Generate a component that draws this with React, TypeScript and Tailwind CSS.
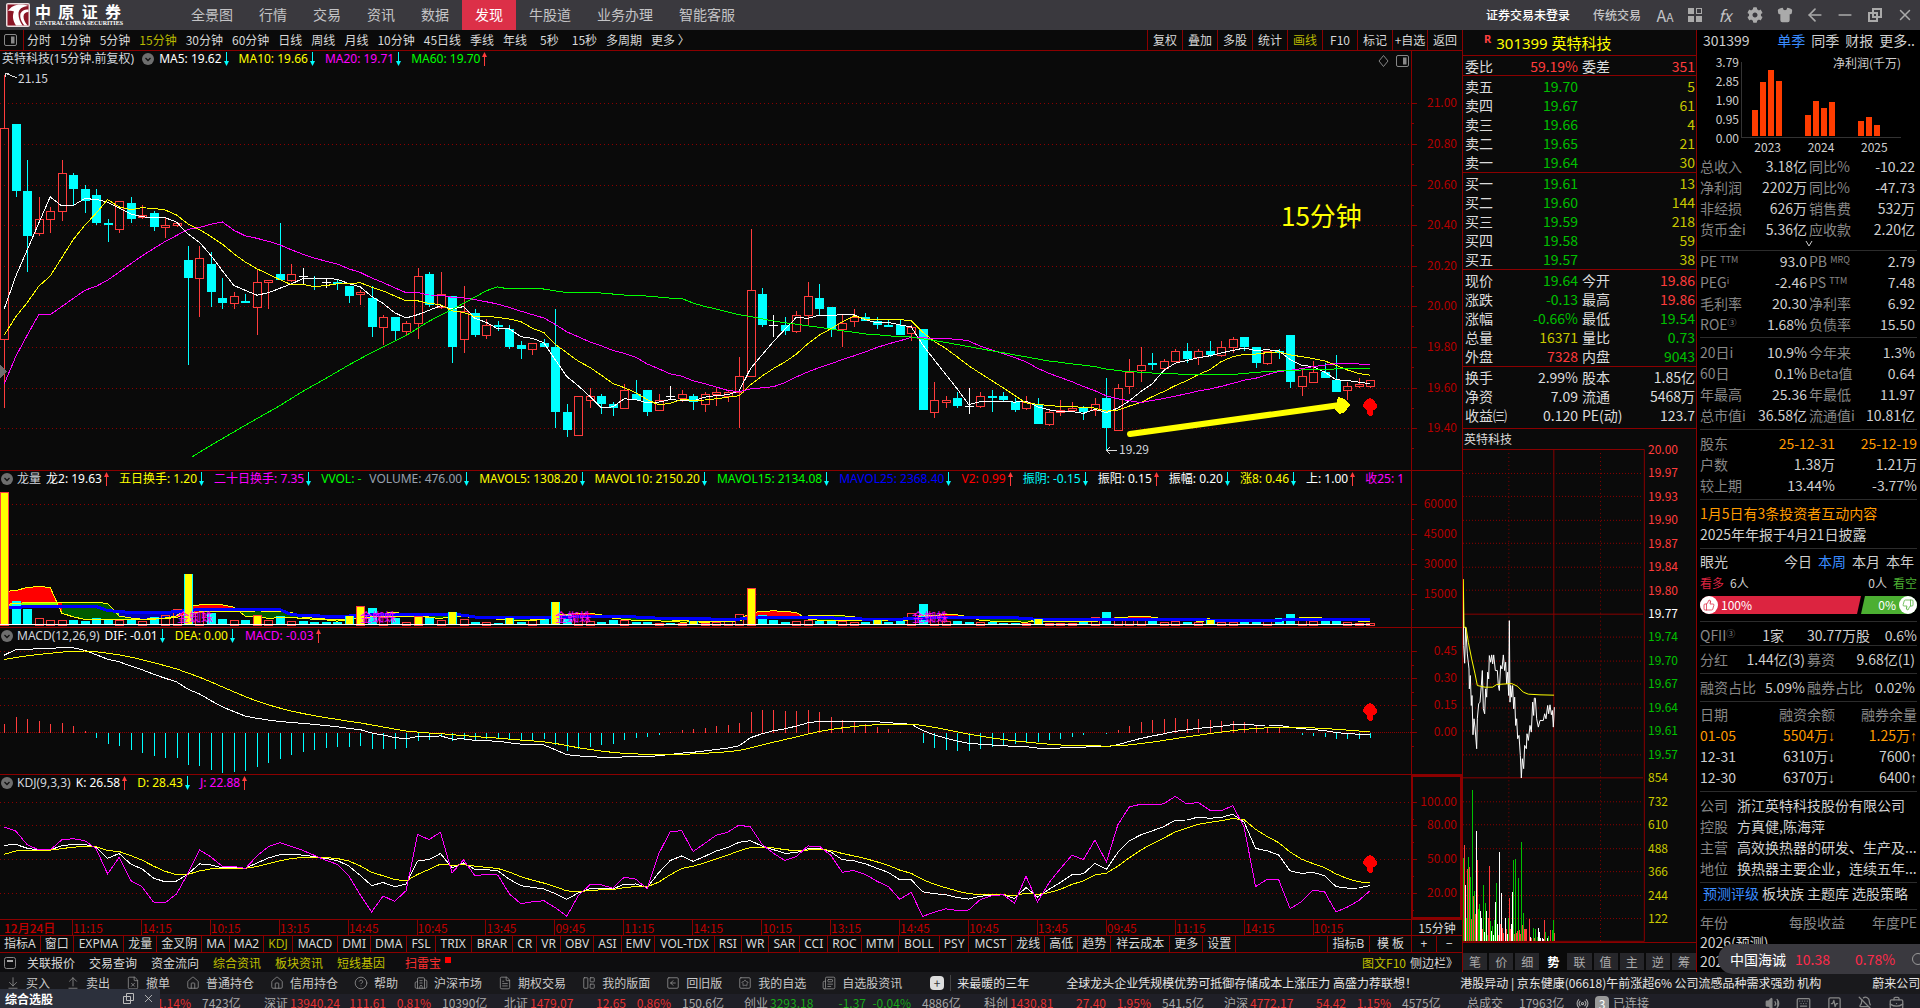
import React, { ReactNode } from 'react';
import {
  ArrowDownToLine,
  ArrowLeft,
  Building2,
  CircleHelp,
  FileText,
  FileX,
  Home,
  Keyboard,
  LayoutPanelLeft,
  Minus,
  Newspaper,
  Radio,
  Shirt,
  SquareActivity,
  SquareArrowLeft,
  SquareStar,
  ThumbsDown,
  ThumbsUp,
  ArrowUpFromLine,
  Volume2,
  BellOff,
  BriefcaseBusiness,
  X,
} from 'lucide-react';
import { FaCog } from 'react-icons/fa';

type Bar = [open: number, high: number, low: number, close: number];

// 15分钟K线: 开 高 低 收
const bars: Bar[] = [
  [19.84, 21.14, 19.5, 20.88], [20.9, 20.9, 20.54, 20.57], [20.57, 20.72, 20.17, 20.35], [20.36, 20.54, 20.35, 20.43],
  [20.43, 20.49, 20.36, 20.47], [20.47, 20.72, 20.42, 20.66], [20.65, 20.66, 20.5, 20.58], [20.58, 20.6, 20.46, 20.52],
  [20.55, 20.58, 20.4, 20.41], [20.41, 20.43, 20.32, 20.4], [20.38, 20.52, 20.36, 20.52], [20.51, 20.54, 20.41, 20.43],
  [20.44, 20.5, 20.43, 20.45], [20.46, 20.47, 20.37, 20.39], [20.39, 20.44, 20.34, 20.4], [20.4, 20.41, 20.39, 20.41],
  [20.23, 20.3, 19.71, 20.14], [20.14, 20.3, 19.95, 20.24], [20.21, 20.27, 20.0, 20.07], [20.04, 20.14, 19.99, 20.02],
  [20.02, 20.07, 19.99, 20.05], [20.03, 20.06, 20.02, 20.02], [20.0, 20.18, 19.86, 20.12], [20.12, 20.13, 19.99, 20.13],
  [20.16, 20.41, 20.13, 20.13], [20.13, 20.21, 20.12, 20.16], [20.15, 20.19, 20.11, 20.15], [20.14, 20.15, 20.08, 20.135],
  [20.12, 20.14, 20.09, 20.12], [20.12, 20.13, 20.08, 20.11], [20.1, 20.1, 20.02, 20.05], [20.06, 20.08, 20.01, 20.07],
  [20.04, 20.1, 19.85, 19.9], [19.9, 19.96, 19.81, 19.95], [19.95, 19.95, 19.83, 19.88], [19.88, 19.93, 19.86, 19.92],
  [19.92, 20.19, 19.84, 20.15], [20.16, 20.17, 20.0, 20.01], [20.0, 20.17, 19.99, 20.06], [20.05, 20.05, 19.72, 19.8],
  [19.84, 20.1, 19.77, 19.98], [19.97, 19.99, 19.85, 19.86], [19.86, 19.94, 19.84, 19.91], [19.91, 19.93, 19.88, 19.9],
  [19.89, 19.91, 19.79, 19.8], [19.81, 19.83, 19.74, 19.79], [19.79, 19.82, 19.76, 19.82], [19.82, 19.84, 19.8, 19.8],
  [19.8, 19.99, 19.4, 19.48], [19.48, 19.52, 19.36, 19.39], [19.37, 19.56, 19.37, 19.56], [19.54, 19.6, 19.5, 19.56],
  [19.56, 19.57, 19.47, 19.52], [19.52, 19.53, 19.46, 19.5], [19.5, 19.62, 19.5, 19.59], [19.57, 19.64, 19.54, 19.54],
  [19.59, 19.59, 19.46, 19.48], [19.49, 19.57, 19.49, 19.54], [19.56, 19.61, 19.54, 19.56], [19.55, 19.59, 19.53, 19.57],
  [19.56, 19.57, 19.49, 19.53], [19.52, 19.58, 19.48, 19.57], [19.57, 19.6, 19.51, 19.58], [19.56, 19.59, 19.53, 19.58],
  [19.58, 19.75, 19.4, 19.66], [19.66, 20.38, 19.66, 20.08], [20.06, 20.09, 19.9, 19.91], [19.91, 19.96, 19.85, 19.91],
  [19.91, 19.95, 19.86, 19.88], [19.88, 19.98, 19.87, 19.96], [19.96, 20.12, 19.91, 20.05], [20.04, 20.11, 19.96, 19.99],
  [20.0, 20.0, 19.85, 19.89], [19.89, 19.96, 19.8, 19.92], [19.93, 19.99, 19.9, 19.95], [19.95, 19.97, 19.93, 19.93],
  [19.93, 19.95, 19.89, 19.91], [19.91, 19.94, 19.9, 19.9], [19.91, 19.94, 19.86, 19.86], [19.87, 19.91, 19.83, 19.9],
  [19.89, 19.89, 19.49, 19.49], [19.48, 19.63, 19.45, 19.54], [19.53, 19.56, 19.5, 19.54], [19.55, 19.58, 19.5, 19.51],
  [19.51, 19.6, 19.47, 19.51], [19.51, 19.58, 19.5, 19.56], [19.56, 19.59, 19.48, 19.55], [19.56, 19.58, 19.53, 19.54],
  [19.53, 19.55, 19.48, 19.49], [19.5, 19.56, 19.49, 19.53], [19.52, 19.55, 19.42, 19.42], [19.42, 19.49, 19.41, 19.48],
  [19.48, 19.54, 19.46, 19.49], [19.49, 19.53, 19.48, 19.5], [19.5, 19.51, 19.44, 19.48], [19.49, 19.55, 19.46, 19.52],
  [19.55, 19.65, 19.29, 19.4], [19.39, 19.62, 19.39, 19.6], [19.61, 19.74, 19.57, 19.68], [19.69, 19.8, 19.63, 19.71],
  [19.72, 19.77, 19.69, 19.71], [19.7, 19.74, 19.7, 19.73], [19.73, 19.79, 19.73, 19.78], [19.78, 19.82, 19.72, 19.74],
  [19.75, 19.79, 19.71, 19.78], [19.78, 19.83, 19.75, 19.76], [19.76, 19.83, 19.75, 19.8], [19.8, 19.85, 19.77, 19.84],
  [19.85, 19.85, 19.78, 19.8], [19.8, 19.8, 19.7, 19.72], [19.72, 19.78, 19.71, 19.78], [19.78, 19.79, 19.74, 19.77],
  [19.86, 19.86, 19.6, 19.63], [19.61, 19.7, 19.56, 19.66], [19.63, 19.73, 19.63, 19.68], [19.68, 19.72, 19.65, 19.65],
  [19.64, 19.76, 19.58, 19.58], [19.59, 19.63, 19.54, 19.61], [19.61, 19.65, 19.6, 19.62], [19.61, 19.64, 19.6, 19.64],
];

// 成交量, 单位500手
const volumes = [
  133, 24, 16, 7, 5, 5, 5, 4, 7, 6, 5, 5, 4, 8, 10, 16, 51, 13, 12, 6, 5, 5, 10, 5, 9, 4, 4, 3, 3, 3, 9, 19, 17, 8, 7, 3, 9, 7, 5, 13,
  6, 3, 3, 2, 7, 3, 5, 9, 23, 10, 9, 4, 3, 5, 5, 3, 3, 2, 2, 2, 4, 2, 3, 5, 11, 37, 10, 5, 3, 4, 5, 4, 4, 4, 3, 3, 5, 3, 4, 12,
  21, 7, 4, 4, 3, 3, 3, 2, 2, 2, 6, 2, 2, 2, 3, 8, 13, 8, 6, 6, 4, 3, 4, 3, 3, 5, 3, 3, 3, 3, 6, 7, 11, 6, 4, 4, 4, 3, 2, 2,
];
const heavy = new Set([0, 16, 22, 30, 31, 36, 39, 44, 48, 60, 65, 76, 90, 105]);

const W = 1411;
const RED = '#8b0000';
const closes = bars.map((b) => b[3]);
const cx = (i: number) => 4.3 + i * 11.48;
const pct = (x: number) => `${(x / W) * 100}%`;

function average(src: number[], n: number, lead: number[]) {
  return src.map((_, i) => {
    if (i < lead.length) return lead[i];
    const part = src.slice(Math.max(0, i - n + 1), i + 1);
    return part.reduce((a, b) => a + b, 0) / part.length;
  });
}

const ma5 = average(closes, 5, [19.99, 20.15, 20.28, 20.41]);
const ma10 = average(closes, 10, [19.86, 19.95, 20.02, 20.1, 20.15, 20.24, 20.33, 20.4, 20.46]);
const ma20 = average(closes, 20, [
  19.62, 19.755, 19.86, 19.96, 19.96, 20.0, 20.04, 20.08, 20.1, 20.13, 20.17, 20.21, 20.25, 20.285, 20.32, 20.35, 20.38, 20.39, 20.405,
]);
const ma60Lead: [number, number][] = [
  [192, 19.26], [212, 19.32], [245, 19.415], [279, 19.51], [302, 19.58], [326, 19.647], [349, 19.713], [371, 19.772], [394, 19.828],
  [406, 19.857], [429, 19.928], [452, 19.985], [474, 20.044], [486, 20.077], [497, 20.097], [509, 20.087], [543, 20.087], [562, 20.072],
  [601, 20.067], [624, 20.057], [647, 20.052], [670, 20.042],
];
const ma60 = average(closes, 60, closes.slice(0, 59));

const volMa5 = average(volumes, 5, [33, 34, 37, 38]);
const volMa10 = average(volumes, 10, [20, 21, 22, 22, 22, 22, 22, 22, 22]);
const volMa25 = average(volumes, 25, [
  17, 17, 18, 18, 18, 18, 18, 18, 18, 14, 13, 12, 12, 12, 12, 13, 14, 15, 15, 15, 15, 15, 15, 15,
]);

// MACD(12,26,9)
let e12 = 19.78;
let e26 = 19.35;
let sig = 0.4056;
const macd = closes.map((c, i) => {
  if (i > 0) {
    e12 += ((c - e12) * 2) / 13;
    e26 += ((c - e26) * 2) / 27;
    sig += ((e12 - e26 - sig) * 2) / 10;
  }
  const dif = e12 - e26;
  return { dif, dea: sig, bar: 2 * (dif - sig) };
});

// KDJ(9,3,3)
const kLead = [62.4, 63.2, 59.7, 58.2, 58.2, 62, 63.2, 63.2];
let kv = 62.4;
let dv = 54.4;
const kdj = closes.map((c, i) => {
  if (i < kLead.length) {
    kv = kLead[i];
  } else {
    const win = bars.slice(i - 8, i + 1);
    const hi = Math.max(...win.map((b) => b[1]));
    const lo = Math.min(...win.map((b) => b[2]));
    kv = (kv * 2 + ((c - lo) / (hi - lo)) * 100) / 3;
  }
  if (i > 0) dv = (dv * 2 + kv) / 3;
  return { k: kv, d: dv, j: 3 * kv - 2 * dv };
});

const py = (p: number) => 52.5 + (21 - p) * 203.1;
const vy = (v: number) => 153.5 - v;
const my = (v: number) => 104.5 - v * 180;
const ky = (v: number) => 141 - v * 1.1333;
const pts = (values: number[], y: (v: number) => number) => values.map((v, i) => `${cx(i).toFixed(1)},${y(v).toFixed(1)}`).join(' ');

function Line({ points, color, width = 1 }: { points: string; color: string; width?: number }) {
  return <polyline points={points} fill="none" stroke={color} strokeWidth={width} />;
}

function Grid({ ys, width = W }: { ys: number[]; width?: number }) {
  return (
    <>
      {ys.map((y) => (
        <line key={y} x1="0" x2={width} y1={y + 0.5} y2={y + 0.5} stroke={RED} strokeDasharray="1 3" />
      ))}
    </>
  );
}

function Axis({ labels, height, minor }: { labels: [number, string][]; height: number; minor: number }) {
  return (
    <svg width="50" height={height} className="block shrink-0 text-xs" shapeRendering="crispEdges">
      {labels.map(([y, text]) => (
        <g key={text}>
          <path d={`M0 ${y + 0.5}h5M0 ${y + minor + 0.5}h2`} stroke={RED} />
          <text x="45" y={y + 4} textAnchor="end" fill="#b40000">{text}</text>
        </g>
      ))}
    </svg>
  );
}

interface PaneProps {
  chart: ReactNode;
  axis: ReactNode;
  children: ReactNode;
  className: string;
  height: number;
  active?: boolean;
}

function Pane({ chart, axis, children, className, height, active }: PaneProps) {
  return (
    <section className={`flex shrink-0 border-b border-[#8b0000] ${className}`}>
      <div className="relative min-w-0 flex-1 overflow-hidden">
        <svg className="absolute inset-0 h-full w-full" viewBox={`0 0 ${W} ${height}`} preserveAspectRatio="none" shapeRendering="crispEdges">
          {chart}
        </svg>
        {children}
      </div>
      <div className={`w-[51px] shrink-0 overflow-hidden border-[#8b0000] ${active ? 'border-2' : 'border-l'}`}>{axis}</div>
    </section>
  );
}

function Trend({ up }: { up?: boolean }) {
  return up ? (
    <svg width="5" height="14" className="ml-0.5 shrink-0"><path d="M2.5 14V2" stroke="#ff3c3c" /><path d="M0 5L2.5 0 5 5z" fill="#ff3c3c" /></svg>
  ) : (
    <svg width="5" height="14" className="ml-0.5 shrink-0"><path d="M2.5 0v12" stroke="#0ff" /><path d="M0 9l2.500 5L5 9z" fill="#0ff" /></svg>
  );
}

interface Reading {
  text: string;
  color: string;
  dir?: 'up' | 'down';
}

function Readout({ title, items }: { title: ReactNode; items: Reading[] }) {
  return (
    <div className="relative flex h-4 items-center whitespace-nowrap font-['Noto_Sans','Noto_Sans_CJK_SC',sans-serif] text-xs leading-4">
      {title}
      {items.map((it) => (
        <span key={it.text} className={`flex shrink-0 items-center ${it.dir ? 'mr-2.5' : 'mr-2'} ${it.color}`}>
          {it.text}
          {it.dir && <Trend up={it.dir === 'up'} />}
        </span>
      ))}
    </div>
  );
}

function Fold() {
  return (
    <button aria-label="折叠" className="mx-px shrink-0">
      <svg width="12" height="12" viewBox="0 0 12 12"><circle cx="6" cy="6" r="6" fill="#6e6e6e" /><path d="M3.5 5L6 7.5 8.5 5" stroke="#111" strokeWidth="1.3" fill="none" /></svg>
    </button>
  );
}

const UpMark = ({ y }: { y: number }) => (
  <path d={`M1370 ${y}l4 2 3 5v2l-3 3h-1v4l-2 2h-2l-2-2v-4h-1l-3-3v-2l3-5z`} fill="#f00" />
);

function PricePane() {
  return (
    <Pane
      className="h-[420px]"
      height={419}
      axis={
        <Axis
          height={419}
          minor={20}
          labels={[[52, '21.00'], [93, '20.80'], [134, '20.60'], [174, '20.40'], [215, '20.20'], [255, '20.00'], [296, '19.80'], [337, '19.60'], [377, '19.40']]}
        />
      }
      chart={
        <>
          <Grid ys={[52, 93, 134, 174, 215, 255, 296, 337, 377]} />
          {bars.map(([o, h, l, c], i) => {
            const x = Math.round(cx(i)) - 4;
            const mid = x + 4.5;
            const top = Math.round(py(Math.max(o, c)));
            const bottom = Math.round(py(Math.min(o, c)));
            const color = o === c ? '#fff' : c > o ? '#ff3c3c' : '#0ff';
            if (c > o) {
              return (
                <g key={i} stroke={color} fill="none">
                  <path d={`M${mid} ${py(h)}V${top}M${mid} ${bottom}V${py(l)}`} />
                  <rect x={x + 0.5} y={top + 0.5} width="8" height={Math.max(2, bottom - top)} />
                </g>
              );
            }
            return (
              <g key={i} stroke={color}>
                <path d={`M${mid} ${py(h)}V${py(l)}`} />
                <rect x={x} y={top} width="9" height={Math.max(1, bottom - top)} fill={color} stroke="none" />
              </g>
            );
          })}
          <Line points={pts(ma5, py)} color="#fff" />
          <Line points={pts(ma10, py)} color="#ff0" />
          <Line points={pts(ma20, py)} color="#f0f" />
          <Line
            points={[...ma60Lead.map(([x, p]) => `${x},${py(p)}`), ...ma60.slice(59).map((p, i) => `${cx(i + 59)},${py(p)}`)].join(' ')}
            color="#0f0"
          />
          <path d="M17 27L5 22M5 26v-4h4" stroke="#ddd" fill="none" />
          <path d="M1117 399.500h-10M1110 396l-3 3.500l3 3.500" stroke="#ddd" fill="none" />
          <path d="M1130 383L1340 354" stroke="#ff0" strokeWidth="6" strokeLinecap="round" shapeRendering="auto" />
          <path d="M1338 346l6 2 6 6-5 7-6 2-4-5z" fill="#ff0" />
          <UpMark y={347} />
          <path d="M0 314l7 6.500l-7 6.500z" fill="#6e6e6e" />
        </>
      }
    >
      <Readout
        title={<><span className="ml-0.5 mr-[7px] text-gray-300">英特科技(15分钟.前复权)</span><Fold /><span className="w-1" /></>}
        items={[
          { text: 'MA5: 19.62', color: 'text-white', dir: 'down' },
          { text: 'MA10: 19.66', color: 'text-[#ffff00]', dir: 'down' },
          { text: 'MA20: 19.71', color: 'text-[#ff00ff]', dir: 'down' },
          { text: 'MA60: 19.70', color: 'text-[#00ff00]', dir: 'up' },
        ]}
      />
      <div className="absolute right-0.5 top-1 flex items-center gap-[7px] text-[#888]">
        <svg width="11" height="12"><path d="M5.500 0.500L10 6l-4.500 5.500L1 6z" fill="none" stroke="currentColor" /></svg>
        <SplitIcon />
      </div>
      <span className="absolute top-[19px] text-xs leading-4 text-gray-300" style={{ left: pct(18) }}>21.15</span>
      <span className="absolute top-[390px] text-xs leading-4 text-gray-300" style={{ left: pct(1119) }}>19.29</span>
      <span className="absolute top-[148px] text-[26px] leading-8 text-[#ffff00]" style={{ left: pct(1281) }}>15分钟</span>
    </Pane>
  );
}

function SplitIcon() {
  return (
    <svg width="13" height="12" className="text-[#888]"><rect x="0.500" y="0.500" width="12" height="11" rx="1.500" fill="none" stroke="currentColor" /><path d="M7 2.500h3.500v7H7z" fill="currentColor" /></svg>
  );
}

// 两条均线之间的填充
function Band({ a, b, over, under }: { a: number[]; b: number[]; over: string; under: string }) {
  return (
    <>
      {a.slice(1).map((_, i) => (
        <polygon
          key={i}
          points={`${cx(i)},${vy(a[i])} ${cx(i + 1)},${vy(a[i + 1])} ${cx(i + 1)},${vy(b[i + 1])} ${cx(i)},${vy(b[i])}`}
          fill={a[i] + a[i + 1] > b[i] + b[i + 1] ? over : under}
        />
      ))}
    </>
  );
}

function VolumeBar({ i }: { i: number }) {
  const x = Math.round(cx(i)) - 4;
  const up = bars[i][3] > bars[i][0];
  const h = volumes[i];
  if (up) return <rect x={x + 0.5} y={vy(h) + 0.5} width="8" height={h} fill={heavy.has(i) ? '#ff0' : 'none'} stroke="#ff3c3c" />;
  return (
    <>
      <rect x={x} y={vy(h)} width="9" height={h} fill="#0ff" />
      {heavy.has(i) && <rect x={x + 1} y={vy(h)} width="7" height={h} fill="#ff0" />}
    </>
  );
}

function VolumePane() {
  return (
    <Pane
      className="h-[157px]"
      height={156}
      axis={<Axis height={156} minor={15} labels={[[33, '60000'], [63, '45000'], [93, '30000'], [123, '15000']]} />}
      chart={
        <>
          <Grid ys={[33, 63, 93, 123]} />
          <Band a={volMa10} b={volMa25} over="#8f0" under="#0000b4" />
          <Band a={volMa5} b={volMa10} over="#f00" under="#005a00" />
          {bars.map((_, i) => !heavy.has(i) && <VolumeBar key={i} i={i} />)}
          <Line points={pts(volMa5, vy)} color="#ff0" />
          <Line points={pts(volMa10, vy)} color="#ff0" />
          <Line points={pts(volMa25, vy)} color="#00f" width={3} />
          {[...heavy].map((i) => <VolumeBar key={i} i={i} />)}
          <path d="M0 153.500h1370" stroke="#fff" />
        </>
      }
    >
      <Readout
        title={<><Fold /><span className="ml-[3px] mr-[5px] text-gray-300">龙量</span></>}
        items={[
          { text: '龙2: 19.63', color: 'text-white', dir: 'up' },
          { text: '五日换手: 1.20', color: 'text-[#ffff00]', dir: 'down' },
          { text: '二十日换手: 7.35', color: 'text-[#ff00ff]', dir: 'down' },
          { text: 'VVOL: -', color: 'text-[#00ff00]' },
          { text: 'VOLUME: 476.00', color: 'text-gray-400', dir: 'down' },
          { text: 'MAVOL5: 1308.20', color: 'text-[#ffff00]', dir: 'down' },
          { text: 'MAVOL10: 2150.20', color: 'text-[#ffff00]', dir: 'down' },
          { text: 'MAVOL15: 2134.08', color: 'text-[#00ff00]', dir: 'down' },
          { text: 'MAVOL25: 2368.40', color: 'text-[#0000ff]', dir: 'down' },
          { text: 'V2: 0.99', color: 'text-[#ff0000]', dir: 'up' },
          { text: '振阴: -0.15', color: 'text-[#00ffff]', dir: 'down' },
          { text: '振阳: 0.15', color: 'text-white', dir: 'up' },
          { text: '振幅: 0.20', color: 'text-white', dir: 'down' },
          { text: '涨8: 0.46', color: 'text-[#ffff00]', dir: 'down' },
          { text: '上: 1.00', color: 'text-white', dir: 'up' },
          { text: '收25: 1', color: 'text-[#ff00ff]' },
        ]}
      />
      {[195, 378, 573, 930].map((x) => (
        <span key={x} className="absolute bottom-0.5 -translate-x-1/2 text-xs leading-4 text-[#ff00ff]" style={{ left: pct(x) }}>金蜘蛛</span>
      ))}
    </Pane>
  );
}

function MacdPane() {
  return (
    <Pane
      className="h-[147px]"
      height={146}
      axis={<Axis height={146} minor={14} labels={[[23, '0.45'], [50, '0.30'], [77, '0.15'], [104, '0.00']]} />}
      chart={
        <>
          <Grid ys={[23, 50, 77]} />
          <path d="M0 104.500H1411" stroke={RED} strokeDasharray="1 1" />
          {macd.map((m, i) => (
            <path key={i} d={`M${Math.round(cx(i)) + 0.5} 104.500V${my(m.bar).toFixed(1)}`} stroke={m.bar > 0 ? '#ff3c3c' : '#0ff'} />
          ))}
          <Line points={pts(macd.map((m) => m.dif), my)} color="#fff" />
          <Line points={pts(macd.map((m) => m.dea), my)} color="#ff0" />
          <UpMark y={75} />
        </>
      }
    >
      <Readout
        title={<><Fold /><span className="ml-[3px] mr-[5px] text-gray-300">MACD(12,26,9)</span></>}
        items={[
          { text: 'DIF: -0.01', color: 'text-white', dir: 'down' },
          { text: 'DEA: 0.00', color: 'text-[#ffff00]', dir: 'down' },
          { text: 'MACD: -0.03', color: 'text-[#ff00ff]', dir: 'up' },
        ]}
      />
    </Pane>
  );
}

function KdjPane() {
  return (
    <Pane
      active
      className="h-[145px]"
      height={144}
      axis={<div className="-ml-px -mt-0.5"><Axis height={144} minor={17} labels={[[27, '100.00'], [50, '80.00'], [84, '50.00'], [118, '20.00']]} /></div>}
      chart={
        <>
          <Grid ys={[27, 50, 84, 118]} />
          <Line points={pts(kdj.map((v) => v.k), ky)} color="#fff" />
          <Line points={pts(kdj.map((v) => v.d), ky)} color="#ff0" />
          <Line points={pts(kdj.map((v) => v.j), ky)} color="#f0f" />
          <UpMark y={80} />
        </>
      }
    >
      <Readout
        title={<><Fold /><span className="ml-[3px] mr-[5px] text-gray-300">KDJ(9,3,3)</span></>}
        items={[
          { text: 'K: 26.58', color: 'text-white', dir: 'up' },
          { text: 'D: 28.43', color: 'text-[#ffff00]', dir: 'down' },
          { text: 'J: 22.88', color: 'text-[#ff00ff]', dir: 'up' },
        ]}
      />
    </Pane>
  );
}

const menu = ['全景图', '行情', '交易', '资讯', '数据', '发现', '牛股道', '业务办理', '智能客服'];

function Header() {
  const tool = 'flex h-[30px] w-[30px] shrink-0 items-center justify-center';
  return (
    <header className="flex h-[30px] shrink-0 items-center whitespace-nowrap bg-[#3a393e] text-[#c4c4c6]">
      <div className="flex w-[178px] shrink-0 items-center gap-[5px] pl-1.5">
        <svg width="24" height="24" viewBox="0 0 24 24">
          <rect width="24" height="24" rx="2" fill="#e9dfe0" />
          <rect x="1.5" y="1.5" width="21" height="21" fill="#8c1626" />
          <path d="M2 8C6 2 13 0 22.500 3C16 3.500 12.500 6 12.500 11c0 4 1.500 8 4 11.500H10C7 18 6 13 8 8.500C6 7.500 4 7.500 2 8z" fill="#fff" />
          <path d="M14.500 10.500C16 7.500 19 6 22.500 6.500v2.500c-3 0-5 1.500-5 4.500 0 3 1.500 6 4 9h-3C15.500 19 13.500 14.500 14.500 10.500z" fill="#fff" />
        </svg>
        <div className="w-[86px] text-white">
          <div className="flex justify-between text-base font-bold leading-[17px]">
            <span>中</span><span>原</span><span>证</span><span>券</span>
          </div>
          <div className="font-['Liberation_Serif',serif] text-[6px] font-bold leading-[7px]">CENTRAL CHINA SECURITIES</div>
        </div>
      </div>
      <nav className="flex text-sm leading-7">
        {menu.map((m) => (
          <a key={m} href="#" className={`h-[30px] px-[13px] ${m === '发现' ? 'bg-[#dc3048] text-white' : ''}`}>{m}</a>
        ))}
      </nav>
      <div className="ml-auto flex items-center text-xs">
        <button className="mr-[23px] font-medium text-white">证券交易未登录</button>
        <button className="mr-[9px] font-medium">传统交易</button>
        <button className={tool} aria-label="字体"><span className="text-base leading-4">A</span><span className="pt-1 text-xs leading-3">A</span></button>
        <button className={tool} aria-label="布局">
          <svg width="14" height="14"><path d="M0 0h6v6H0zM0 8h6v6H0zM8 8h6v6H8z" fill="#aaa" /><rect x="8.5" y="0.5" width="5" height="5" fill="none" stroke="#aaa" /></svg>
        </button>
        <button className={`${tool} text-base italic`} aria-label="公式">fx</button>
        <button className={tool} aria-label="设置"><FaCog size={16} color="#aaa" /></button>
        <button className={tool} aria-label="皮肤"><Shirt size={16} color="#aaa" fill="#aaa" /></button>
        <button className={tool} aria-label="后退"><ArrowLeft size={20} color="#aaa" /></button>
        <button className={tool} aria-label="最小化"><Minus size={20} color="#aaa" /></button>
        <button className={tool} aria-label="还原">
          <svg width="14" height="14" fill="none" stroke="#aaa" strokeWidth="2"><path d="M5 1h8v8H5zM1 5h8v8H1z" /></svg>
        </button>
        <button className={tool} aria-label="关闭"><X size={18} color="#aaa" /></button>
      </div>
    </header>
  );
}

const periods = ['分时', '1分钟', '5分钟', '15分钟', '30分钟', '60分钟', '日线', '周线', '月线', '10分钟', '45日线', '季线', '年线', '5秒', '15秒', '多周期', '更多 〉'];
const tools = ['复权', '叠加', '多股', '统计', '画线', 'F10', '标记', '+自选', '返回'];

function PeriodBar() {
  return (
    <div className="flex h-[21px] shrink-0 items-stretch whitespace-nowrap border-b border-[#8b0000] text-xs leading-[18px] text-[#d8d8d8]">
      <button aria-label="侧栏" className="flex w-6 shrink-0 items-center border-r border-[#8b0000] pl-1"><SplitIcon /></button>
      <div className="flex flex-1 gap-[9px] overflow-hidden pl-[3px]">
        {periods.map((p) => (
          <button key={p} className={`${p === '15分钟' ? 'text-[#b8b800]' : ''} ${p === '5秒' ? 'px-1' : ''}`}>{p}</button>
        ))}
      </div>
      {tools.map((t) => (
        <button key={t} className={`w-[35px] shrink-0 border-l border-[#8b0000] ${t === '画线' ? 'text-[#b8b800]' : ''}`}>{t}</button>
      ))}
    </div>
  );
}

const times = ['11:15', '14:15', '10:15', '13:15', '14:45', '10:45', '13:45', '09:45', '11:15', '14:15', '10:15', '13:15', '14:45', '10:45', '13:45', '09:45', '11:15', '14:15', '10:15'];

function TimeAxis() {
  return (
    <div className="flex h-4 shrink-0 border-b border-[#8b0000] text-xs leading-[15px] text-[#c00000]">
      <div className="flex min-w-0 flex-1">
        <div className="flex-[730] whitespace-nowrap"><span className="pl-1 font-medium">12月24日</span></div>
        {times.map((t, i) => (
          <span key={i} className={`border-l border-[#8b0000] ${i === times.length - 1 ? 'flex-[990]' : 'flex-[689]'}`}>{t}</span>
        ))}
      </div>
      <span className="w-[51px] shrink-0 border-l border-[#8b0000] text-center text-[#d8d8d8]">15分钟</span>
    </div>
  );
}

const indicators = [
  '指标A', '窗口', 'EXPMA', '龙量', '金叉阴', 'MA', 'MA2', 'KDJ', 'MACD', 'DMI', 'DMA', 'FSL', 'TRIX', 'BRAR', 'CR', 'VR', 'OBV', 'ASI', 'EMV',
  'VOL-TDX', 'RSI', 'WR', 'SAR', 'CCI', 'ROC', 'MTM', 'BOLL', 'PSY', 'MCST', '龙线', '高低', '趋势', '祥云成本', '更多', '设置',
];

function IndicatorBar() {
  return (
    <div className="flex h-[17px] shrink-0 whitespace-nowrap border-b border-[#8b0000] font-['Noto_Sans','Noto_Sans_CJK_SC',sans-serif] text-xs leading-4 text-[#d8d8d8]">
      <div className="flex min-w-0 flex-1 overflow-hidden">
        {indicators.map((t) => (
          <button
            key={t}
            className={`shrink-0 border-r border-[#8b0000] ${t.length > 3 ? 'px-[5px]' : 'px-1'} ${t === 'KDJ' ? 'text-[#b8b800]' : ''}`}
          >
            {t}
          </button>
        ))}
      </div>
      <button className="w-[42px] shrink-0 border-l border-[#8b0000]">指标B</button>
      <button className="w-[42px] shrink-0 border-l border-[#8b0000]">模 板</button>
      <button className="w-[25px] shrink-0 border-l border-[#8b0000]">+</button>
      <button className="w-[26px] shrink-0 border-l border-[#8b0000]">−</button>
    </div>
  );
}

function LinkBar() {
  return (
    <div className="flex h-[19px] shrink-0 items-center gap-[14px] whitespace-nowrap bg-[#0d0d0f] text-xs leading-4 text-[#d8d8d8]">
      <svg width="12" height="12" className="ml-1 mr-[-3px]"><rect x="0.5" y="0.5" width="11" height="11" rx="2" fill="none" stroke="#888" /><path d="M3 3h6v2H3z" fill="#aaa" /></svg>
      {['关联报价', '交易查询', '资金流向'].map((t) => <a key={t} href="#">{t}</a>)}
      {['综合资讯', '板块资讯', '短线基因'].map((t) => <a key={t} href="#" className="text-[#c0c000]">{t}</a>)}
      <a href="#" className="ml-1.5 flex gap-1 text-[#ff3030]">扫雷宝<span className="mt-0.5 h-1.5 w-1.5 bg-[#ff0000]" /></a>
      <span className="ml-auto mr-1 flex gap-1"><a href="#" className="text-[#c0c000]">图文F10</a><a href="#">侧边栏》</a></span>
    </div>
  );
}

type Cell = [text: string, color: string];
type QuoteRow = [string, Cell, string, Cell];

const R = 'text-[#ff3c3c]';
const G = 'text-[#00c000]';
const Y = 'text-[#c8c800]';
const N = 'text-[#dcdcdc]';

const book = (rows: [string, string, string][]): QuoteRow[] => rows.map(([a, p, v]) => [a, [p, G], '', [v, Y]]);

const quoteBlocks: QuoteRow[][] = [
  [['委比', ['59.19%', R], '委差', ['351', R]]],
  book([['卖五', '19.70', '5'], ['卖四', '19.67', '61'], ['卖三', '19.66', '4'], ['卖二', '19.65', '21'], ['卖一', '19.64', '30']]),
  book([['买一', '19.61', '13'], ['买二', '19.60', '144'], ['买三', '19.59', '218'], ['买四', '19.58', '59'], ['买五', '19.57', '38']]),
  [
    ['现价', ['19.64', G], '今开', ['19.86', R]],
    ['涨跌', ['-0.13', G], '最高', ['19.86', R]],
    ['涨幅', ['-0.66%', G], '最低', ['19.54', G]],
    ['总量', ['16371', Y], '量比', ['0.73', G]],
    ['外盘', ['7328', R], '内盘', ['9043', G]],
  ],
  [
    ['换手', ['2.99%', N], '股本', ['1.85亿', N]],
    ['净资', ['7.09', N], '流通', ['5468万', N]],
    ['收益㈢', ['0.120', N], 'PE(动)', ['123.7', N]],
  ],
];

const priceScale = ['20.00', '19.97', '19.93', '19.90', '19.87', '19.84', '19.80', '19.77', '19.74', '19.70', '19.67', '19.64', '19.61', '19.57'];
const volScale = ['854', '732', '610', '488', '366', '244', '122'];

// 分时量: x, 高度, 颜色
const ticks: [number, number, string][] = [
  [10, 83, 'g'], [13, 96, 'r'], [16, 56, 'w'], [19, 23, 'g'], [22, 72, 'r'], [25, 84, 'g'], [28, 74, 'r'], [31, 64, 'g'], [34, 22, 'r'],
  [37, 151, 'g'], [40, 45, 'r'], [43, 50, 'g'], [46, 27, 'r'], [49, 110, 'w'], [52, 81, 'r'], [55, 32, 'g'], [58, 37, 'g'], [61, 30, 'w'],
  [64, 23, 'w'], [67, 12, 'r'], [70, 56, 'g'], [73, 9, 'w'], [76, 38, 'g'], [79, 30, 'w'], [82, 6, 'g'], [85, 23, 'r'], [88, 75, 'r'],
  [91, 20, 'g'], [94, 10, 'w'], [97, 15, 'g'], [100, 6, 'w'], [103, 21, 'g'], [106, 39, 'w'], [109, 58, 'g'], [112, 17, 'w'], [115, 6, 'r'],
  [118, 89, 'w'], [121, 17, 'r'], [124, 48, 'w'], [127, 13, 'r'], [130, 8, 'r'], [136, 23, 'w'], [139, 12, 'r'], [142, 7, 'w'], [145, 23, 'g'],
  [148, 43, 'r'], [151, 12, 'r'], [154, 17, 'w'], [157, 49, 'w'], [160, 81, 'g'], [163, 7, 'r'], [166, 82, 'g'], [169, 8, 'r'], [172, 10, 'r'],
  [175, 63, 'g'], [178, 11, 'r'], [181, 7, 'r'], [184, 99, 'g'], [187, 16, 'r'], [190, 28, 'g'], [193, 12, 'r'], [196, 12, 'r'], [199, 12, 'r'],
  [206, 22, 'r'], [209, 4, 'w'], [212, 3, 'r'], [218, 13, 'g'], [221, 3, 'r'], [224, 12, 'g'], [230, 4, 'g'], [233, 13, 'w'], [236, 9, 'w'],
  [241, 3, 'w'], [246, 3, 'w'], [250, 2, 'w'], [253, 21, 'r'], [256, 9, 'g'], [260, 3, 'w'], [264, 5, 'g'], [271, 11, 'r'], [277, 11, 'g'],
  [280, 21, 'g'], [283, 8, 'r'],
];
const tickColor: Record<string, string> = { g: '#00c000', r: '#ff3c3c', w: '#fff' };

function MiniChart() {
  return (
    <svg className="block h-full w-full" viewBox="0 0 546 1482" preserveAspectRatio="none" shapeRendering="crispEdges">
      <g fill="none" stroke={RED} strokeWidth="3">
        {Array.from({ length: 20 }, (_, i) => i + 1).map((i) => (
          <path key={i} d={`M0 ${Math.round(i * 23.5) * 3 + 1.5}H540`} strokeDasharray={i === 7 || i === 14 ? undefined : '3 6'} />
        ))}
        <path d="M0 1.500H544V1480H0" />
        <path d="M272.500 0V1480" />
        <path d="M137.500 0V1480M412.500 0V1480" strokeDasharray="3 9" />
      </g>
      <g transform="translate(-9 121)" fill="none" strokeWidth="3">
        <polyline
          stroke="#fff"
          points="10,308 11,470 14,523 17,415 22,495 27,540 28,600 31,560 34,650 36,620 39,738 42,690 45,715 50,780 52,690 56,645 60,640 64,590 67,545 70,660 74,675 77,600 80,625 83,550 86,570 88,500 92,520 95,498 98,525 101,498 106,545 112,545 115,590 118,605 122,530 126,540 130,498 134,545 137,520 140,585 143,550 146,620 148,395 150,640 152,590 155,625 158,590 161,660 164,625 167,710 170,690 173,750 177,740 181,800 184,868 187,810 191,840 194,770 199,780 201,735 205,755 210,710 214,730 218,640 221,680 223,628 226,628 230,690 235,715 240,695 250,695 254,675 258,690 263,650 266,675 270,648 274,678 277,665 280,715 283,655"
        />
        <polyline
          stroke="#ff0"
          points="10,270 12,415 18,415 25,460 35,510 45,555 52,590 75,595 98,595 110,587 155,584 172,592 190,610 205,616 240,618 282,619"
        />
      </g>
      {ticks.map(([x, h, c]) => (
        <rect key={x} x={x - 9} y={1478 - h * 3} width="3" height={h * 3} fill={tickColor[c]} />
      ))}
    </svg>
  );
}

function QuotePanel() {
  return (
    <aside className="flex w-[235px] shrink-0 flex-col whitespace-nowrap border-l border-r border-[#8b0000] text-sm">
      <h2 className="flex h-[25px] shrink-0 items-center pl-[21px] font-['Noto_Sans','Noto_Sans_CJK_SC',sans-serif] text-[15px] leading-6 text-[#ffff00]">
        <span className="mr-[5px] self-start text-[11px] font-bold leading-[18px] text-[#ff4040]">R</span>301399 英特科技
      </h2>
      {quoteBlocks.map((rows, b) => (
        <table key={b} className={`w-full table-fixed border-separate border-spacing-0 border-t border-[#8b0000] leading-[18px] ${b > 0 ? 'mb-px' : ''}`}>
          <tbody>
            {rows.map(([a, [v1, c1], d, [v2, c2]]) => (
              <tr key={a} className="h-[19px]">
                <th scope="row" className="w-[54px] p-0 pl-0.5 text-left font-normal text-[#dcdcdc]">{a}</th>
                <td className={`w-[61px] p-0 text-right ${c1}`}>{v1}</td>
                <td className="w-[54px] p-0 pl-1 text-[#dcdcdc]">{d}</td>
                <td className={`p-0 pr-px text-right ${c2}`}>{v2}</td>
              </tr>
            ))}
          </tbody>
        </table>
      ))}
      <h3 className="mt-[3px] h-[21px] shrink-0 border-t border-[#8b0000] pl-px text-xs leading-5 text-[#dcdcdc]">英特科技</h3>
      <div className="flex h-[494px] shrink-0 border-b border-[#8b0000]">
        <div className="w-[182px] shrink-0"><MiniChart /></div>
        <div className="-mt-3 mb-3 flex flex-1 flex-col pl-[3px] text-xs">
          {priceScale.map((p, i) => (
            <span key={p} className={`flex flex-1 items-center ${i < 7 ? R : i === 7 ? 'text-white' : G}`}>{p}</span>
          ))}
          {volScale.map((p) => (
            <span key={p} className={`flex flex-1 items-center ${Y}`}>{p}</span>
          ))}
        </div>
      </div>
      <div className="mt-[10px] flex h-[17px] shrink-0 gap-0.5 text-xs leading-[17px] text-[#aaa]">
        {['笔', '价', '细', '势', '联', '值', '主', '逆', '筹'].map((t) => (
          <button key={t} className={`flex-1 ${t === '势' ? 'font-bold text-white' : 'bg-[#26262a]'}`}>{t}</button>
        ))}
      </div>
    </aside>
  );
}

function PairTable({ rows }: { rows: [ReactNode, string, ReactNode, string][] }) {
  return (
    <table className="w-full table-fixed border-collapse">
      <tbody>
        {rows.map(([a, b, c, d], i) => (
          <tr key={i} className="h-[21px]">
            <th scope="row" className="w-[46px] p-0 text-left font-normal text-[#868686]">{a}</th>
            <td className="w-[61px] p-0 text-right">{b}</td>
            <td className="w-[52px] p-0 pl-0.5 text-[#868686]">{c}</td>
            <td className="p-0 pr-0.5 text-right">{d}</td>
          </tr>
        ))}
      </tbody>
    </table>
  );
}

function Amount({ text }: { text: string }) {
  const arrow = text.match(/[↑↓]$/);
  if (!arrow) return <>{text}</>;
  return <>{text.slice(0, -1)}<span className="font-['Liberation_Sans',sans-serif] leading-none">{arrow[0]}</span></>;
}

function TripleTable({ rows }: { rows: { cells: string[]; tone?: string }[] }) {
  return (
    <table className="w-full table-fixed border-collapse">
      <tbody>
        {rows.map(({ cells: [a, b, c], tone = '' }) => (
          <tr key={a} className={`h-[21px] ${tone}`}>
            <td className="w-[52px] p-0">{a}</td>
            <td className="w-[83px] p-0 text-right"><Amount text={b} /></td>
            <td className="p-0 text-right"><Amount text={c} /></td>
          </tr>
        ))}
      </tbody>
    </table>
  );
}

const Sup = ({ children }: { children: ReactNode }) => <span className="relative -top-1 text-[9px] leading-none">{children}</span>;

const profit: [number, number][] = [
  [12, 26], [20, 54], [28, 66], [36, 55], [65, 21], [73, 35], [81, 28], [89, 34], [118, 15], [126, 19], [134, 11],
];

function InfoPanel() {
  const rule = 'border-b border-[#2c2c2c]';
  return (
    <aside className="w-[223px] shrink-0 overflow-hidden whitespace-nowrap bg-black pl-[3px] pr-[3px] text-sm leading-[21px] text-[#cfcfcf]">
      <div className="flex h-[21px] pl-[3px] pr-0.5">
        <span>301399</span>
        <span className="ml-auto flex gap-1.5">
          <button className="text-[#3a8cff]">单季</button><button>同季</button><button>财报</button><button>更多..</button>
        </span>
      </div>
      <div className="flex h-[105px] text-xs">
        <div className="flex w-[41px] flex-col pr-0.5 pt-px text-right leading-[19px]">
          {['3.79', '2.85', '1.90', '0.95', '0.00'].map((v) => <span key={v}>{v}</span>)}
        </div>
        <div className="relative w-[160px]">
          <svg width="160" height="87" className="block" shapeRendering="crispEdges">
            <path d="M0.500 11V86.500H160" stroke="#333" fill="none" />
            {profit.map(([x, h]) => <rect key={x} x={x - 1} y={85 - h} width="6" height={h} fill="#ff3c00" />)}
          </svg>
          <div className="flex leading-[18px]">
            {['2023', '2024', '2025'].map((y) => <span key={y} className="flex-1 text-center">{y}</span>)}
          </div>
          <span className="absolute right-0 top-0.5 leading-5">净利润(千万)</span>
        </div>
      </div>
      <PairTable
        rows={[
          ['总收入', '3.18亿', '同比%', '-10.22'],
          ['净利润', '2202万', '同比%', '-47.73'],
          ['非经损', '626万', '销售费', '532万'],
          ['货币金i', '5.36亿', '应收款', '2.20亿'],
        ]}
      />
      <button className={`flex h-[11px] w-full justify-center ${rule}`} aria-label="展开">
        <svg width="8" height="8"><path d="M1 1l3 5 3-5" fill="none" stroke="#ccc" /></svg>
      </button>
      <div className={`pb-0.5 ${rule}`}>
        <PairTable
          rows={[
            [<>PE <Sup>TTM</Sup></>, '93.0', <>PB <Sup>MRQ</Sup></>, '2.79'],
            [<>PEG<Sup>i</Sup></>, '-2.46', <>PS <Sup>TTM</Sup></>, '7.48'],
            ['毛利率', '20.30', '净利率', '6.92'],
            [<>ROE<Sup>③</Sup></>, '1.68%', '负债率', '15.50'],
          ]}
        />
      </div>
      <div className={`pb-[3px] pt-1 ${rule}`}>
        <PairTable
          rows={[
            ['20日i', '10.9%', '今年来', '1.3%'],
            ['60日', '0.1%', 'Beta值', '0.64'],
            ['年最高', '25.36', '年最低', '11.97'],
            ['总市值i', '36.58亿', '流通值i', '10.81亿'],
          ]}
        />
      </div>
      <div className={`pb-[3px] pt-[3px] ${rule}`}>
        <TripleTable
          rows={[
            { cells: ['股东', '25-12-31', '25-12-19'], tone: '[&>td+td]:text-[#ff9a00] [&>td:first-child]:text-[#868686]' },
            { cells: ['户数', '1.38万', '1.21万'], tone: '[&>td:first-child]:text-[#868686]' },
            { cells: ['较上期', '13.44%', '-3.77%'], tone: '[&>td:first-child]:text-[#868686]' },
          ]}
        />
      </div>
      <div className={`pb-[3px] pt-[3px] ${rule}`}>
        <a href="#" className="block text-[#ff9a00]">1月5日有3条投资者互动内容</a>
        <p>2025年年报于4月21日披露</p>
      </div>
      <div className={`h-[73px] pt-0.5 ${rule}`}>
        <div className="flex gap-[6px] pr-[3px]">
          <span className="mr-auto">眼光</span>
          <button>今日</button><button className="text-[#3a8cff]">本周</button><button>本月</button><button>本年</button>
        </div>
        <div className="flex gap-1.5 text-xs leading-[22px]">
          <span className="text-[#dc2440]">看多</span><span>6人</span><span className="ml-auto">0人</span><span className="text-[#4caf32]">看空</span>
        </div>
        <div className="mt-0.5 flex h-[18px] items-center text-xs leading-[18px] text-white">
          <div className="flex h-full flex-1 items-center rounded-l-full bg-[#dc2440] [clip-path:polygon(0_0,100%_0,calc(100%-4px)_100%,0_100%)]">
            <span className="mr-[3px] flex h-[18px] w-[18px] items-center justify-center rounded-full bg-white"><ThumbsUp size={12} color="#dc2440" strokeWidth={1.5} /></span>100%
          </div>
          <div className="flex h-full w-[56px] items-center justify-end rounded-r-full bg-[#4caf32] [clip-path:polygon(4px_0,100%_0,100%_100%,0_100%)]">
            0%<span className="ml-[3px] flex h-[18px] w-[18px] items-center justify-center rounded-full bg-white"><ThumbsDown size={12} color="#4caf32" strokeWidth={1.5} /></span>
          </div>
        </div>
      </div>
      <div className={`flex h-6 pt-[3px] ${rule}`}>
        <span className="w-[45px] text-[#868686]">QFII<Sup>③</Sup></span>
        <span className="w-[39px] text-right">1家</span><span className="flex-1 text-right">30.77万股</span><span className="w-[47px] text-right">0.6%</span>
      </div>
      <div className={`flex h-7 pr-0.5 pt-[3px] ${rule}`}>
        <span className="text-[#868686]">分红</span><span className="flex-1 text-right">1.44亿(3)</span>
        <span className="ml-0.5 text-[#868686]">募资</span><span className="w-[80px] text-right">9.68亿(1)</span>
      </div>
      <div className={`flex h-7 pr-0.5 pt-[3px] ${rule}`}>
        <span className="text-[#868686]">融资占比</span><span className="flex-1 text-right">5.09%</span>
        <span className="ml-0.5 text-[#868686]">融券占比</span><span className="w-[52px] text-right">0.02%</span>
      </div>
      <div className={`pb-[3px] pt-0.5 ${rule}`}>
        <TripleTable
          rows={[
            { cells: ['日期', '融资余额', '融券余量'], tone: 'text-[#868686]' },
            { cells: ['01-05', '5504万↓', '1.25万↑'], tone: 'text-[#ff9a00]' },
            { cells: ['12-31', '6310万↓', '7600↑'] },
            { cells: ['12-30', '6370万↓', '6400↑'] },
          ]}
        />
      </div>
      <dl className={`grid grid-cols-[37px_minmax(0,1fr)] pb-[3px] pt-[3px] ${rule}`}>
        <dt className="text-[#868686]">公司</dt><dd>浙江英特科技股份有限公司</dd>
        <dt className="text-[#868686]">控股</dt><dd>方真健,陈海萍</dd>
        <dt className="text-[#868686]">主营</dt><dd className="overflow-hidden">高效换热器的研发、生产及...</dd>
        <dt className="text-[#868686]">地位</dt><dd className="overflow-hidden">换热器主要企业，连续五年...</dd>
      </dl>
      <div className={`flex h-[27px] items-start gap-[3px] pl-[3px] ${rule}`}>
        <button className="text-[#3a8cff]">预测评级</button><button>板块族</button><button>主题库</button><button>选股策略</button>
      </div>
      <div className="pt-0.5">
        <div className="flex text-[#868686]"><span>年份</span><span className="flex-1 text-right">每股收益</span><span className="w-[72px] text-right">年度PE</span></div>
        <p className="leading-[18px]">2026(预测)</p>
        <p>2025(预测)</p>
      </div>
    </aside>
  );
}

const shortcuts: [ReactNode, string][] = [
  [<ArrowDownToLine size={14} strokeWidth={1.3} />, '买入'],
  [<ArrowUpFromLine size={14} strokeWidth={1.3} />, '卖出'],
  [<FileX size={14} strokeWidth={1.3} />, '撤单'],
  [<Home size={14} strokeWidth={1.3} />, '普通持仓'],
  [<Home size={14} strokeWidth={1.3} />, '信用持仓'],
  [<CircleHelp size={14} strokeWidth={1.3} />, '帮助'],
  [<Building2 size={14} strokeWidth={1.3} />, '沪深市场'],
  [<FileText size={14} strokeWidth={1.3} />, '期权交易'],
  [<LayoutPanelLeft size={14} strokeWidth={1.3} />, '我的版面'],
  [<SquareArrowLeft size={14} strokeWidth={1.3} />, '回旧版'],
  [<SquareStar size={14} strokeWidth={1.3} />, '我的自选'],
  [<Newspaper size={14} strokeWidth={1.3} />, '自选股资讯'],
];

function ShortcutBar() {
  return (
    <div className="flex h-[22px] shrink-0 items-center overflow-hidden whitespace-nowrap bg-[#19191c] text-xs leading-4 text-[#c8c8c8]">
      <div className="flex shrink-0 gap-4 pl-1.5">
        {shortcuts.map(([icon, t]) => (
          <button key={t} className="flex items-center gap-1.5"><span className="text-[#999]">{icon}</span>{t}</button>
        ))}
      </div>
      <button aria-label="添加" className="ml-7 flex h-3.5 w-3.5 shrink-0 items-center justify-center rounded-sm bg-[#ddd] text-[#333]">+</button>
      <div className="ml-1.5 flex min-w-0 flex-1 overflow-hidden border-l border-[#444] pl-1.5 text-[#e4e4e4]">
        <a href="#" className="w-[109px] shrink-0">来最暖的三年</a>
        <a href="#" className="w-[394px] shrink-0">全球龙头企业凭规模优势可抵御存储成本上涨压力 高盛力荐联想！</a>
        <a href="#" className="w-[412px] shrink-0">港股异动 | 京东健康(06618)午前涨超6% 公司流感品种需求强劲 机构</a>
        <a href="#" className="shrink-0">蔚来公司</a>
      </div>
    </div>
  );
}

const indices: [string, string, string, string, string, boolean][] = [
  ['', '', '', '1.14%', '7423亿', true],
  ['深证', '13940.24', '111.61', '0.81%', '10390亿', true],
  ['北证', '1479.07', '12.65', '0.86%', '150.6亿', true],
  ['创业', '3293.18', '-1.37', '-0.04%', '4886亿', false],
  ['科创', '1430.81', '27.40', '1.95%', '541.5亿', true],
  ['沪深', '4772.17', '54.42', '1.15%', '4575亿', true],
];

function StatusBar() {
  return (
    <footer className="flex h-6 shrink-0 overflow-hidden whitespace-nowrap bg-[#1f1f27] pl-6 text-xs leading-[18px] text-[#a8a8a8]">
      {indices.map(([name, value, diff, rate, amount, up]) => (
        <div key={amount} className="flex w-[240px] shrink-0">
          <span className="w-[26px]">{name}</span>
          <span className={`flex ${up ? 'text-[#e83030]' : 'text-[#18a818]'}`}>
            <span className="w-[50px]">{value}</span><span className="w-[46px] text-right">{diff}</span><span className="w-[45px] text-right">{rate}</span>
          </span>
          <span className="ml-[11px]">{amount}</span>
        </div>
      ))}
      <span className="ml-[3px] w-[52px] shrink-0">总成交</span><span className="w-[57px] shrink-0">17963亿</span>
      <Radio size={13} className="mr-1.5 mt-[3px] shrink-0" />
      <span className="mr-1 mt-0.5 h-4 w-[14px] shrink-0 rounded-sm bg-[#999] text-center leading-4 text-white">3</span>已连接
      <div className="ml-auto flex gap-4 pr-4 pt-0.5 text-[#888]">
        <Volume2 size={15} fill="currentColor" /><Keyboard size={15} /><SquareActivity size={15} /><BellOff size={15} /><BriefcaseBusiness size={15} />
      </div>
    </footer>
  );
}

export default function App() {
  return (
    <div className="relative flex h-screen flex-col overflow-hidden bg-[#0a0a0a] font-['Noto_Sans_CJK_SC',sans-serif]">
      <Header />
      <main className="flex shrink-0">
        <div className="flex min-w-0 flex-1 flex-col">
          <PeriodBar />
          <PricePane />
          <VolumePane />
          <MacdPane />
          <KdjPane />
          <TimeAxis />
          <IndicatorBar />
          <LinkBar />
        </div>
        <div className="flex h-[942px] shrink-0">
          <QuotePanel />
          <InfoPanel />
        </div>
      </main>
      <ShortcutBar />
      <StatusBar />

      {/* 悬浮窗口 */}
      <div className="absolute bottom-0 left-0 flex h-[19px] w-[160px] items-center bg-[#2c303c] px-[5px] text-xs font-bold text-white">
        综合选股
        <span className="ml-auto flex gap-2">
          <button aria-label="还原"><svg width="11" height="11" fill="none" stroke="#bbb"><path d="M3.500 0.500h7v7h-7zM0.500 3.500h7v7h-7z" /></svg></button>
          <button aria-label="关闭"><X size={13} color="#ccc" strokeWidth={1.5} /></button>
        </span>
      </div>
      <div className="absolute bottom-[34px] right-0 flex h-[30px] w-[202px] items-center overflow-hidden whitespace-nowrap rounded-l-full bg-[#3a393f] pl-3 text-sm text-white">
        中国海诚<span className="ml-[9px] text-[#ff2a4a]">10.38</span><span className="ml-[25px] text-[#ff2a4a]">0.78%</span>
        <svg width="12" height="12" className="ml-auto -mr-1"><circle cx="6" cy="6" r="5.500" fill="none" stroke="#999" /></svg>
      </div>
    </div>
  );
}
